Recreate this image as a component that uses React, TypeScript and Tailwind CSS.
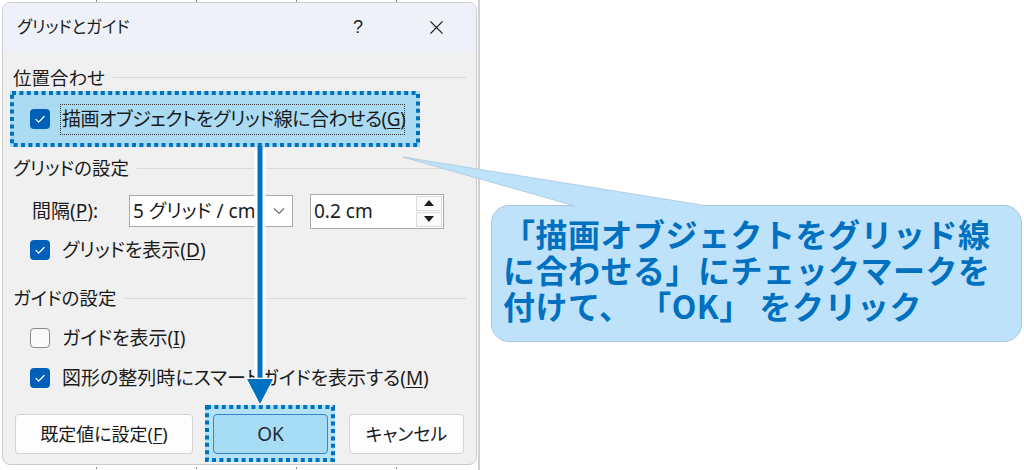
import React from 'react';

const Check = ({ checked }: { checked: boolean }) =>
  checked ? (
    <span className="flex h-5 w-5 shrink-0 items-center justify-center rounded-[4px] bg-[#005fb8]">
      <svg viewBox="0 0 20 20" className="h-5 w-5">
        <path d="M6 10.4l2.7 2.7 5.4-5.6" fill="none" stroke="#ffffff" strokeWidth="1.3" strokeLinecap="round" strokeLinejoin="round" />
      </svg>
    </span>
  ) : (
    <span className="h-5 w-5 shrink-0 rounded-[4px] border border-[#8b8b8b] bg-[#f9f9f9]" />
  );

// dotted annotation frame (square dots)
const DottedFrame = ({ w, h }: { w: number; h: number }) => (
  <svg width={w} height={h} className="pointer-events-none absolute left-0 top-0">
    <rect x="2" y="2" width={w - 4} height={h - 4} fill="none" stroke="#0070c0" strokeWidth="4" strokeDasharray="4 3.4" />
  </svg>
);

const Heading = ({ label, className }: { label: string; className: string }) => (
  <div className={`flex items-center gap-2 px-[10px] text-[18.5px] ${className}`}>
    <span className="whitespace-nowrap">{label}</span>
    <span className="h-px flex-1 bg-[#dadada]" />
  </div>
);

const Ticks = () => (
  <div className="flex h-[2px] gap-[99px] pl-[96px]">
    {[0, 1, 2, 3].map((i) => (
      <span key={i} className="h-[2px] w-px bg-[#8c8c8c]" />
    ))}
  </div>
);

const App: React.FC = () => {
  return (
    <div className="relative flex h-[470px] w-[1024px] overflow-hidden bg-white font-['Noto_Sans','Noto_Sans_CJK_JP',sans-serif] text-[#1b1b1b]">
      {/* Dialog column */}
      <div className="flex w-[480px] shrink-0 flex-col border-r-2 border-[#d0d0d0]">
        <Ticks />
        <div className="ml-[2px] flex h-[463px] w-[475px] flex-col overflow-hidden rounded-lg border border-[#cccccc] bg-[#f0f0f0] [font-feature-settings:'palt']">
          {/* Title bar */}
          <div className="flex h-[49px] shrink-0 items-center bg-[#eef2f8] pl-[14px]">
            <span className="text-[16.5px]">グリッドとガイド</span>
            <div className="ml-auto flex pr-px">
              <span className="flex w-[78px] justify-center text-[18px] font-['Liberation_Sans',sans-serif]">?</span>
              <span className="flex w-[78px] items-center justify-center">
                <svg viewBox="0 0 16 16" className="h-[15px] w-[15px]">
                  <path d="M1.5 1.5l13 13M14.5 1.5l-13 13" stroke="#1b1b1b" strokeWidth="1.3" />
                </svg>
              </span>
            </div>
          </div>

          {/* Body */}
          <Heading label="位置合わせ" className="mt-[12px] h-[27px]" />

          <div className="relative ml-[7px] flex h-[56px] w-[410px] items-center bg-[#aadbf3] pl-[20px]">
            <DottedFrame w={410} h={56} />
            <Check checked />
            <span className="ml-[10px] flex h-[31px] w-[345px] items-center border border-dotted border-[#3a3a3a] pl-[1px] text-[19px] tracking-[-0.5px] whitespace-nowrap">
              描画オブジェクトをグリッド線に合わせる(<span className="underline underline-offset-2">G</span>)
            </span>
          </div>

          <Heading label="グリッドの設定" className="mt-[5px] h-[32px]" />

          <div className="mt-[9px] flex h-[36px] items-center pl-[29px] text-[19px]">
            <span className="w-[97px] whitespace-nowrap">
              間隔(<span className="underline underline-offset-2">P</span>):
            </span>
            <div className="flex h-[32px] w-[164px] items-center border border-[#a9a9a9] bg-white">
              <span className="w-[136px] overflow-hidden whitespace-nowrap pl-[3px]">5 グリッド / cm</span>
              <span className="flex flex-1 justify-center">
                <svg viewBox="0 0 12 8" className="h-[8px] w-[12px]">
                  <path d="M1 1.5l5 5 5-5" fill="none" stroke="#6b6b6b" strokeWidth="1.1" />
                </svg>
              </span>
            </div>
            <div className="ml-[17px] flex h-[35px] w-[134px] items-center border border-[#a9a9a9] bg-white">
              <span className="flex-1 pl-[3px]">0.2 cm</span>
              <div className="mr-px flex w-[26px] flex-col gap-px">
                <span className="flex h-[15px] items-center justify-center border border-[#dcdcdc] bg-[#fafafa]">
                  <svg viewBox="0 0 10 6" className="h-[6px] w-[10px]"><path d="M0 6L5 0l5 6z" fill="#1b1b1b" /></svg>
                </span>
                <span className="flex h-[15px] items-center justify-center border border-[#dcdcdc] bg-[#fafafa]">
                  <svg viewBox="0 0 10 6" className="h-[6px] w-[10px]"><path d="M0 0h10L5 6z" fill="#1b1b1b" /></svg>
                </span>
              </div>
            </div>
          </div>

          <div className="mt-px flex h-[40px] items-center gap-[12px] pl-[27px] text-[19px]">
            <Check checked />
            <span className="whitespace-nowrap">
              グリッドを表示(<span className="underline underline-offset-2">D</span>)
            </span>
          </div>

          <Heading label="ガイドの設定" className="mt-[12px] h-[32px]" />

          <div className="mt-[4px] flex h-[40px] items-center gap-[12px] pl-[27px] text-[19px]">
            <Check checked={false} />
            <span className="whitespace-nowrap">
              ガイドを表示(<span className="underline underline-offset-2">I</span>)
            </span>
          </div>
          <div className="flex h-[40px] items-center gap-[12px] pl-[27px] text-[19px]">
            <Check checked />
            <span className="whitespace-nowrap">
              図形の整列時にスマートガイドを表示する(<span className="underline underline-offset-2">M</span>)
            </span>
          </div>

          {/* Buttons */}
          <div className="mt-[7px] flex items-start pl-[12px] text-[18px]">
            <button className="mt-[9px] flex h-[40px] w-[178px] items-center justify-center rounded-[4px] border border-[#d3d3d3] bg-[#fdfdfd]">
              既定値に設定(<span className="underline underline-offset-2">F</span>)
            </button>
            <div className="relative ml-[12px] h-[57px] w-[130px] bg-[#b3e1f6] pl-[8px] pt-[9px]">
              <DottedFrame w={130} h={57} />
              <button className="relative flex h-[40px] w-[115px] items-center justify-center rounded-[4px] border border-[#3487cf] bg-[#a7dcf5] text-[19px] text-[#1f2a33]">
                OK
              </button>
            </div>
            <button className="ml-[14px] mt-[9px] flex h-[40px] w-[115px] items-center justify-center rounded-[4px] border border-[#d3d3d3] bg-[#fdfdfd]">
              キャンセル
            </button>
          </div>
        </div>
        <div className="mt-auto pb-px">
          <Ticks />
        </div>
      </div>

      {/* Callout */}
      <div className="pl-[11px] pt-[205px]">
        <div className="h-[137px] w-[531px] rounded-[18px] border border-[#a9c7db] bg-[#bde2fa] pl-[11px] pt-[9px] font-['Noto_Sans_CJK_JP',sans-serif] text-[32px] font-bold leading-[36px] text-[#0070c0]">
          <p className="whitespace-pre tracking-[0.5px]">
            {'「描画オブジェクトをグリッド線\nに合わせる」にチェックマークを\n付けて、 「OK」 をクリック'}
          </p>
        </div>
      </div>

      {/* Arrow and callout tail */}
      <svg className="pointer-events-none absolute left-0 top-0" width="1024" height="470">
        <line x1="260" y1="150" x2="260" y2="382" stroke="#ffffff" strokeWidth="11" />
        <line x1="260" y1="146" x2="260" y2="382" stroke="#0070c0" strokeWidth="5" />
        <polygon points="247,379 273,379 260,404" fill="#0070c0" stroke="#ffffff" strokeWidth="2.5" paintOrder="stroke" strokeLinejoin="round" />
        <polygon points="403,157 702,205 702,209 575,209 575,206" fill="#bde2fa" />
        <line x1="403" y1="157" x2="702" y2="205" stroke="#a9c7db" strokeWidth="0.8" />
        <line x1="403" y1="157" x2="575" y2="206" stroke="#a9c7db" strokeWidth="0.8" />
      </svg>
    </div>
  );
};

export default App;
